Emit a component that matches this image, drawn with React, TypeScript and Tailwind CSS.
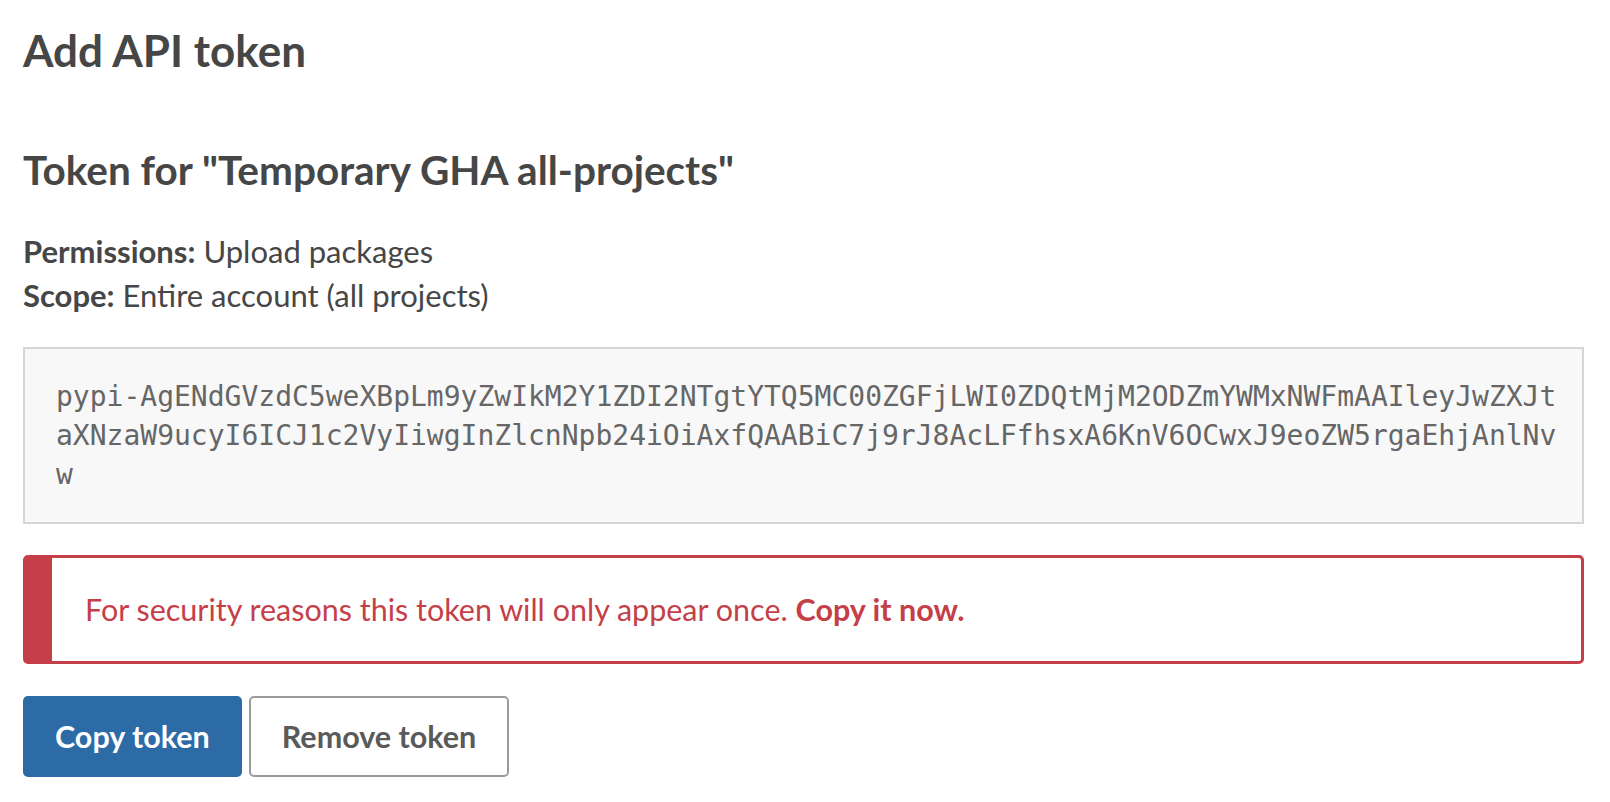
const TOKEN =
  "pypi-AgENdGVzdC5weXBpLm9yZwIkM2Y1ZDI2NTgtYTQ5MC00ZGFjLWI0ZDQtMjM2ODZmYWMxNWFmAAIleyJwZXJtaXNzaW9ucyI6ICJ1c2VyIiwgInZlcnNpb24iOiAxfQAABiC7j9rJ8AcLFfhsxA6KnV6OCwxJ9eoZW5rgaEhjAnlNvw"

export default function App() {
  return (
    <div className="min-h-screen bg-white text-[#464646] font-['Lato',sans-serif]">
      <div className="pl-[23px] pr-[26px] pt-[22px]">
        <h1 className="text-[44px] leading-[56px] font-bold">Add API token</h1>

        <h2 className="mt-[68px] text-[40.5px] leading-[48px] font-bold">
          Token for "Temporary GHA all-projects"
        </h2>

        <div className="mt-[35px] text-[31px] leading-[44px]">
          <p>
            <strong className="font-bold">Permissions:</strong> Upload packages
          </p>
          <p>
            <strong className="font-bold">Scope:</strong> Entire account (all projects)
          </p>
        </div>

        <div className="mt-[30px] border-2 border-[#d6d6d6] bg-[#f8f8f8] pl-[31px] pr-[20px] py-[28px]">
          <code className="block break-all font-['DejaVu_Sans_Mono',monospace] text-[28px] leading-[39px] text-[#666666]">
            {TOKEN}
          </code>
        </div>

        <div className="mt-[31px] flex h-[109px] items-center rounded-[5px] border-[3px] border-l-[29px] border-[#c53f48] pl-[33px] text-[30.5px] text-[#c53f48]">
          <p>
            For security reasons this token will only appear once.{" "}
            <strong className="font-bold">Copy it now.</strong>
          </p>
        </div>

        <div className="mt-[32px] flex gap-[7px]">
          <button className="h-[81px] rounded-[5px] bg-[#2d6ba7] px-[32px] text-[30.5px] font-bold text-white">
            Copy token
          </button>
          <button className="h-[81px] rounded-[5px] border-2 border-[#9b9b9b] bg-white px-[31px] text-[30.5px] font-bold text-[#5a5a5a]">
            Remove token
          </button>
        </div>
      </div>
    </div>
  )
}
